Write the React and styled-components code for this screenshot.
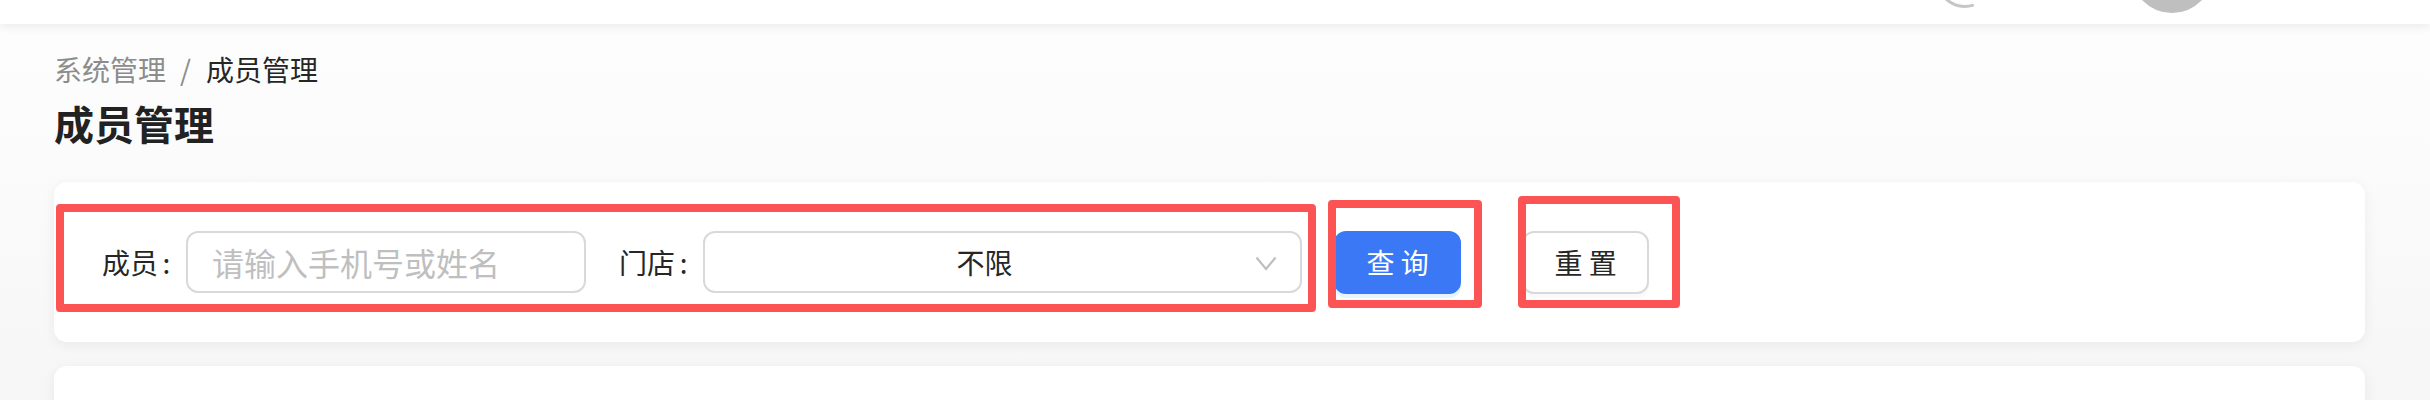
import React from "react";
import styled, { createGlobalStyle } from "styled-components";

const GlobalStyle = createGlobalStyle`
  html, body {
    margin: 0;
    padding: 0;
  }
  body {
    background: linear-gradient(#fdfdfd 0px, #fbfbfb 160px, #f6f6f6 400px);
    font-family: "Noto Sans CJK SC", "Noto Sans", sans-serif;
    color: #262626;
  }
  * { box-sizing: border-box; }
`;

const Page = styled.div`
  display: flex;
  flex-direction: column;
  min-height: 400px;
  overflow: hidden;
`;

const Header = styled.header`
  height: 24px;
  background: #fff;
  box-shadow: 0 3px 10px rgba(0, 0, 0, 0.07);
  display: flex;
  justify-content: flex-end;
  align-items: flex-end;
  padding-right: 217px;
  overflow: hidden;
  position: relative;
  z-index: 1;
`;

const HeaderIcon = styled.svg`
  flex: none;
  margin-bottom: 15px;
  margin-right: 131px;
`;

const Avatar = styled.div`
  flex: none;
  width: 82px;
  height: 82px;
  border-radius: 50%;
  background: #bfbfbf;
  margin-bottom: 11px;
`;

const Main = styled.main`
  display: flex;
  flex-direction: column;
  padding: 25px 65px 0 54px;
`;

const Breadcrumb = styled.nav`
  display: flex;
  align-items: center;
  height: 40px;
  font-size: 28px;
  line-height: 40px;
`;

const Crumb = styled.span`
  color: ${(p) => (p.$current ? "#262626" : "#8c8c8c")};
`;

const Separator = styled.span`
  color: #8c8c8c;
  margin: 0 15px 0 14px;
`;

const Title = styled.h1`
  margin: 6px 0 0;
  font-size: 40px;
  line-height: 56px;
  font-weight: 700;
  color: #222;
`;

const Card = styled.section`
  background: #fff;
  border-radius: 13px;
  box-shadow: 0 3px 14px rgba(0, 0, 0, 0.06);
  height: ${(p) => p.$height}px;
  margin-top: ${(p) => p.$top}px;
  display: flex;
  align-items: center;
  padding: 0 48px;
  flex: none;
`;

const Annotated = styled.div`
  position: relative;
  display: flex;
  align-items: center;
  margin-right: ${(p) => p.$gap || 0}px;

  &::after {
    content: "";
    position: absolute;
    top: -${(p) => p.$t}px;
    left: -${(p) => p.$l}px;
    right: -${(p) => p.$r}px;
    bottom: -${(p) => p.$b}px;
    border: 8px solid #fc5454;
    border-radius: 4px;
    pointer-events: none;
  }
`;

const FormItem = styled.div`
  display: flex;
  align-items: center;
  margin-right: ${(p) => p.$gap || 0}px;
`;

const Label = styled.label`
  display: flex;
  align-items: center;
  font-size: 28px;
  line-height: 40px;
  color: #262626;
  white-space: nowrap;
`;

const Colon = styled.span`
  display: inline-block;
  width: 9px;
  text-align: center;
  margin: 0 15px 0 4px;
`;

const Input = styled.input`
  width: 400px;
  height: 62px;
  border: 2px solid #d9d9d9;
  border-radius: 12px;
  padding: 0 24px;
  font-family: inherit;
  font-size: 32px;
  color: #262626;
  background: #fff;
  outline: none;

  &::placeholder {
    color: #bfbfbf;
  }
`;

const Select = styled.div`
  width: 599px;
  height: 62px;
  border: 2px solid #d9d9d9;
  border-radius: 12px;
  background: #fff;
  display: flex;
  align-items: center;
  padding: 0 23px 0 24px;
  gap: 15px;
`;

const SelectValue = styled.span`
  flex: 1;
  text-align: center;
  font-size: 28px;
  color: #262626;
`;

const Chevron = styled.svg`
  flex: none;
  margin-top: 2px;
`;

const Button = styled.button`
  width: 127px;
  height: 63px;
  border-radius: 12px;
  font-family: inherit;
  font-size: 28px;
  white-space: pre;
  cursor: pointer;
  border: 2px solid ${(p) => (p.$primary ? "#3b78f5" : "#d9d9d9")};
  background: ${(p) => (p.$primary ? "#3b78f5" : "#fff")};
  color: ${(p) => (p.$primary ? "#fff" : "#262626")};
  box-shadow: ${(p) =>
    p.$primary ? "0 4px 0 rgba(5, 145, 255, 0.1)" : "0 4px 0 rgba(0, 0, 0, 0.02)"};
  padding: 0;
`;

export default function App() {
  return (
    <>
      <GlobalStyle />
      <Page>
        <Header>
          <HeaderIcon width="70" height="40" viewBox="0 0 70 40">
            <path
              d="M16.24 30.11 A27.5 27.5 0 0 0 42.58 36.43"
              fill="none"
              stroke="#c6c6c6"
              strokeWidth="3"
              strokeLinecap="round"
            />
          </HeaderIcon>
          <Avatar />
        </Header>
        <Main>
          <Breadcrumb>
            <Crumb>系统管理</Crumb>
            <Separator>/</Separator>
            <Crumb $current>成员管理</Crumb>
          </Breadcrumb>
          <Title>成员管理</Title>
          <Card $height={160} $top={31}>
            <Annotated $t={27} $l={46} $r={14} $b={19} $gap={32}>
              <FormItem $gap={33}>
                <Label>
                  成员<Colon>:</Colon>
                </Label>
                <Input placeholder="请输入手机号或姓名" />
              </FormItem>
              <FormItem>
                <Label>
                  门店<Colon>:</Colon>
                </Label>
                <Select>
                  <SelectValue>不限</SelectValue>
                  <Chevron width="22" height="15" viewBox="0 0 22 15">
                    <polyline
                      points="1.5,1.5 11,13 20.5,1.5"
                      fill="none"
                      stroke="#bfbfbf"
                      strokeWidth="2.2"
                    />
                  </Chevron>
                </Select>
              </FormItem>
            </Annotated>
            <Annotated $t={31} $l={6} $r={21} $b={14} $gap={61}>
              <Button $primary>查 询</Button>
            </Annotated>
            <Annotated $t={35} $l={4} $r={31} $b={14}>
              <Button>重 置</Button>
            </Annotated>
          </Card>
          <Card $height={200} $top={24} />
        </Main>
      </Page>
    </>
  );
}
